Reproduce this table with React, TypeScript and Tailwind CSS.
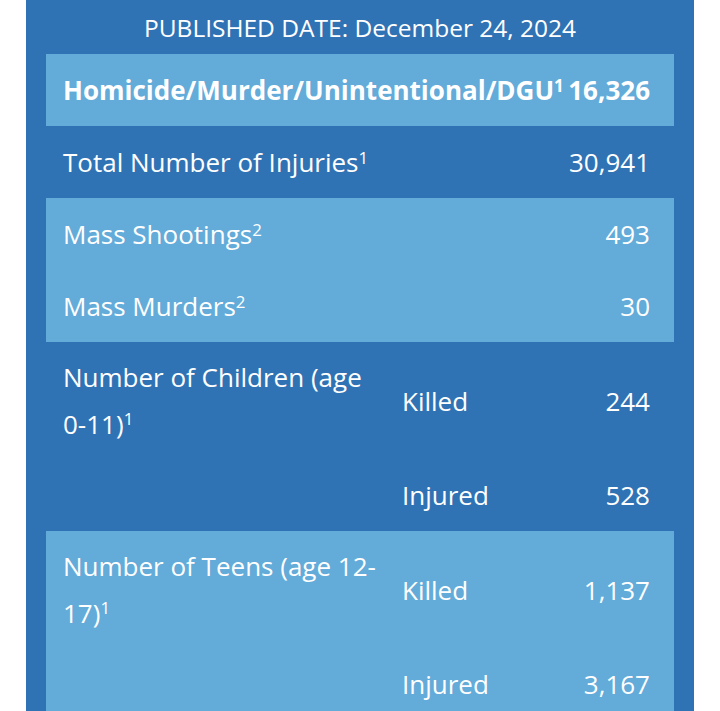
const rows = [
  { label: "Total Number of Injuries", note: "1", value: "30,941", shade: "dark" },
  { label: "Mass Shootings", note: "2", value: "493", shade: "light" },
  { label: "Mass Murders", note: "2", value: "30", shade: "light" },
];

const groups = [
  { label: "Number of Children (age 0-11)", note: "1", killed: "244", injured: "528", shade: "dark" },
  { label: "Number of Teens (age 12-17)", note: "1", killed: "1,137", injured: "3,167", shade: "light" },
];

function Note({ n }: { n: string }) {
  return <sup className="text-[0.65em] leading-none">{n}</sup>;
}

export default function App() {
  const bg = (shade: string) =>
    shade === "light" ? "bg-[#63abd9]" : "bg-[#2f73b5]";

  return (
    <div
      className="min-h-screen w-full bg-white px-[26px] text-white"
      style={{ fontFamily: "'Open Sans', 'Noto Sans', sans-serif" }}
    >
      <div className="min-h-[711px] bg-[#2f73b5] px-5">
        <div className="flex h-[54px] items-center justify-center pt-[2px] text-[24.5px]">
          PUBLISHED DATE: December 24, 2024
        </div>
        <table className="w-full table-fixed border-collapse text-[26px] leading-[48px]">
          <colgroup>
            <col className="w-[339px]" />
            <col className="w-[145px]" />
            <col />
          </colgroup>
          <tbody>
            <tr className="bg-[#63abd9] font-bold">
              <td className="whitespace-nowrap py-3 pl-[17px]" colSpan={2}>
                Homicide/Murder/Unintentional/DGU
                <Note n="1" />
              </td>
              <td className="whitespace-nowrap py-3 pr-6 text-right">16,326</td>
            </tr>
            {rows.map((r) => (
              <tr className={bg(r.shade)} key={r.label}>
                <td className="py-3 pl-[17px]" colSpan={2}>
                  {r.label}
                  <Note n={r.note} />
                </td>
                <td className="py-3 pr-6 text-right">{r.value}</td>
              </tr>
            ))}
            {groups.map((g) => [
              <tr className={bg(g.shade)} key={`${g.label}-k`}>
                <td className="py-3 pl-[17px] leading-[46.5px]">
                  {g.label}
                  <Note n={g.note} />
                </td>
                <td className="py-3 pl-[17px]">Killed</td>
                <td className="py-3 pr-6 text-right">{g.killed}</td>
              </tr>,
              <tr className={bg(g.shade)} key={`${g.label}-i`}>
                <td className="py-3" />
                <td className="py-3 pl-[17px]">Injured</td>
                <td className="py-3 pr-6 text-right">{g.injured}</td>
              </tr>,
            ])}
          </tbody>
        </table>
      </div>
    </div>
  );
}
